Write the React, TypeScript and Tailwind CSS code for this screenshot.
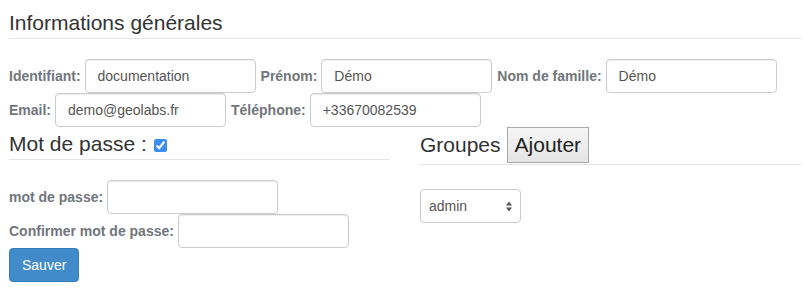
import React from 'react'

const labelCls = 'text-[14px] font-bold text-[#71767c] leading-[20px] whitespace-nowrap'
const inputCls =
  'h-[34px] w-[171px] rounded-[4px] border border-[#ccc] bg-white px-[12px] text-[14px] text-[#555] shadow-[inset_0_1px_1px_rgba(0,0,0,0.075)] outline-none'

function Field({ label, value }: { label: string; value?: string }) {
  return (
    <div className="flex items-center gap-[4px]">
      <label className={labelCls}>{label}</label>
      <input className={inputCls} defaultValue={value ?? ''} type={value === undefined ? 'password' : 'text'} />
    </div>
  )
}

export default function App() {
  return (
    <div
      className="w-[811px] h-[290px] bg-white text-[#333] pl-[9px] pr-[10px] pt-[8px]"
      style={{ fontFamily: '"Liberation Sans", Arial, sans-serif' }}
    >
      {/* Informations générales */}
      <div className="h-[31px] border-b border-[#e5e5e5] text-[21px] leading-[30px]">Informations générales</div>

      <div className="mt-[20px] flex flex-col">
        <div className="flex items-center gap-[5px]">
          <Field label="Identifiant:" value="documentation" />
          <Field label="Prénom:" value="Démo" />
          <Field label="Nom de famille:" value="Démo" />
        </div>
        <div className="flex items-center gap-[5px]">
          <Field label="Email:" value="demo@geolabs.fr" />
          <Field label="Téléphone:" value="+33670082539" />
        </div>
      </div>

      <div className="grid grid-cols-2 gap-[30px]">
        {/* Mot de passe */}
        <div>
          <div className="mt-[2px] h-[31px] border-b border-[#e5e5e5] text-[21px] leading-[30px] flex items-center">
            <span>Mot de passe :</span>
            <input
              type="checkbox"
              defaultChecked
              className="ml-[7px] mt-[2px] h-[13px] w-[13px] accent-[#3b8df0]"
            />
          </div>
          <div className="mt-[20px] flex flex-col">
            <Field label="mot de passe:" />
            <Field label="Confirmer mot de passe:" />
            <div>
              <button className="h-[34px] rounded-[4px] border border-[#357ebd] bg-[#428bca] px-[12px] text-[14px] text-white">
                Sauver
              </button>
            </div>
          </div>
        </div>

        {/* Groupes */}
        <div>
          <div className="flex items-baseline border-b border-[#e5e5e5] text-[21px] h-[38px]">
            <span>Groupes</span>
            <button className="ml-[6px] h-[36px] border border-[#a9a9a9] bg-gradient-to-b from-[#f6f6f6] to-[#e4e4e4] px-[7px] text-[21px] text-[#222]">
              Ajouter
            </button>
          </div>
          <div className="mt-[24px] relative h-[34px] w-[101px] rounded-[4px] border border-[#ccc] bg-white flex items-center pl-[8px] text-[14px] text-[#555]">
            admin
            <svg className="absolute right-[8px] top-[11px]" width="6" height="11" viewBox="0 0 6 11">
              <path d="M0 4.5 L3 0.5 L6 4.5 Z" fill="#555" />
              <path d="M0 6.5 L3 10.5 L6 6.5 Z" fill="#555" />
            </svg>
          </div>
        </div>
      </div>
    </div>
  )
}
